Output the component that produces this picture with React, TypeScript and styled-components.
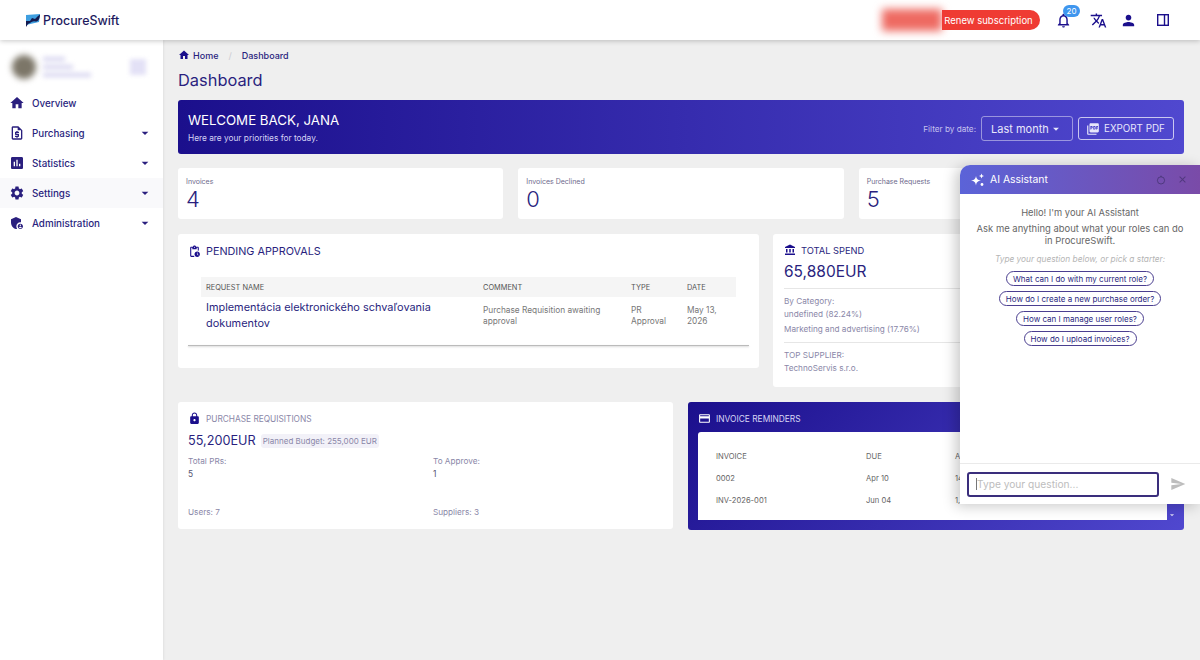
import React from 'react';
import styled, { createGlobalStyle } from 'styled-components';
import {
  MdAccountBalance,
  MdAdminPanelSettings,
  MdArrowDropDown,
  MdAssessment,
  MdClose,
  MdCreditCard,
  MdHome,
  MdLock,
  MdOutlineNotifications,
  MdOutlinePendingActions,
  MdOutlineRequestQuote,
  MdPerson,
  MdPictureAsPdf,
  MdSend,
  MdSettings,
  MdTranslate,
} from 'react-icons/md';

const INK = '#2a1f7e';
const NAVY = '#1b0f8c';
const FONT = '"Inter", "Open Sans", "Liberation Sans", sans-serif';

const GlobalStyle = createGlobalStyle`
  html, body {
    margin: 0;
    padding: 0;
    height: 100%;
    overflow: hidden;
    background: #efefef;
    font-family: ${FONT};
  }
  * { box-sizing: border-box; }
`;

const Page = styled.div`
  position: relative;
  width: 1200px;
  height: 660px;
  overflow: hidden;
  display: flex;
  flex-direction: column;
`;

const TopBar = styled.header`
  height: 40px;
  flex: none;
  background: #fff;
  display: flex;
  align-items: center;
  padding: 0 26px 0 25px;
  box-shadow: 0 1px 5px rgba(0, 0, 0, 0.22);
  position: relative;
  z-index: 2;
`;

const Brand = styled.div`
  display: flex;
  align-items: center;
  gap: 2px;
  font-size: 12.4px;
  font-weight: 500;
  color: #1d1a5e;
  flex: 1;
`;

const RedactedRed = styled.div`
  width: 60px;
  height: 22px;
  background: #ee6a62;
  filter: blur(4px);
`;

const RenewButton = styled.button`
  height: 20px;
  width: 98px;
  border: 0;
  padding: 0 5px 0 0;
  border-radius: 0 10px 10px 0;
  background: #ef3b33;
  color: #fff;
  font: 400 9.5px ${FONT};
  position: relative;
`;

const HeadIcon = styled.div<{ $gap: number }>`
  width: 22px;
  height: 22px;
  display: flex;
  align-items: center;
  justify-content: center;
  color: ${NAVY};
  font-size: 17px;
  margin-left: ${(p) => p.$gap}px;
  position: relative;
`;

const Badge = styled.span`
  position: absolute;
  top: -4px;
  left: 11px;
  width: 17px;
  height: 12px;
  border-radius: 6px;
  background: #3f96ee;
  color: #fff;
  font-size: 8px;
  line-height: 12px;
  text-align: center;
`;

const Body = styled.div`
  flex: 1;
  display: flex;
  min-height: 0;
`;

const Sidebar = styled.aside`
  width: 163px;
  flex: none;
  background: #fff;
  box-shadow: 1px 0 2px rgba(0, 0, 0, 0.06);
  padding-top: 7px;
`;

const UserBlock = styled.div`
  height: 40px;
  display: flex;
  align-items: center;
  padding: 0 12px;
`;

const Avatar = styled.div`
  width: 24px;
  height: 24px;
  border-radius: 50%;
  background: #7c7668;
  filter: blur(3px);
  margin-right: 7px;
`;

const BlurLines = styled.div`
  flex: 1;
  display: flex;
  flex-direction: column;
  gap: 4px;
  filter: blur(2.5px);
`;

const BlurLine = styled.div<{ $w: number }>`
  height: 4px;
  width: ${(p) => p.$w}px;
  background: #d6d4ef;
`;

const BlurSquare = styled.div`
  width: 16px;
  height: 16px;
  background: #e3e1f6;
  filter: blur(2px);
  margin-right: 5px;
`;

const Nav = styled.nav`
  display: flex;
  flex-direction: column;
  margin-top: 1px;
`;

const NavItem = styled.div<{ $hover?: boolean }>`
  height: 30px;
  display: flex;
  align-items: center;
  padding: 0 10px 0 9px;
  color: ${INK};
  font-size: 9.8px;
  font-weight: 500;
  background: ${(p) => (p.$hover ? '#f9f9fb' : 'transparent')};
  svg { flex: none; }
`;

const NavLabel = styled.span`
  flex: 1;
  margin-left: 7px;
`;

const Main = styled.main`
  flex: 1;
  min-width: 0;
  padding: 8px 16px 0 15px;
`;

const Crumbs = styled.div`
  display: flex;
  align-items: center;
  height: 14px;
  font-size: 9px;
  font-weight: 500;
  color: ${INK};
  gap: 3px;
`;

const CrumbSep = styled.span`
  color: #cfcfd6;
  margin: 0 7px;
`;

const PageTitle = styled.h1`
  margin: 8px 0 10px;
  font-size: 16.4px;
  line-height: 20px;
  font-weight: 400;
  color: ${INK};
`;

const Banner = styled.section`
  height: 54px;
  border-radius: 3px;
  background: linear-gradient(90deg, #1b0f8c 0%, #5048cf 100%);
  display: flex;
  align-items: center;
  padding: 0 10px;
  color: #fff;
  margin-bottom: 14px;
`;

const BannerText = styled.div`
  flex: 1;
`;

const BannerTitle = styled.div`
  font-size: 13.3px;
  line-height: 17px;
  font-weight: 400;
`;

const BannerSub = styled.div`
  font-size: 8.3px;
  margin-top: 4px;
  color: #d6d3f4;
`;

const FilterLabel = styled.span`
  font-size: 8.2px;
  color: #c5c2ee;
  margin-right: 5px;
  margin-top: 3px;
`;

const OutlineBox = styled.div`
  border: 1px solid rgba(255, 255, 255, 0.45);
  border-radius: 3px;
  display: flex;
  align-items: center;
  color: #e8e7fb;
  margin-top: 3px;
`;

const DateSelect = styled(OutlineBox)`
  width: 92px;
  height: 25px;
  font-size: 11px;
  padding-left: 9px;
  margin-right: 5px;
`;

const ExportButton = styled(OutlineBox)`
  width: 96px;
  height: 23px;
  font-size: 9.8px;
  padding-left: 7px;
  gap: 4px;
  border-color: rgba(255, 255, 255, 0.7);
`;

const StatRow = styled.div`
  display: grid;
  grid-template-columns: repeat(3, 1fr);
  gap: 15px;
  margin-bottom: 15px;
`;

const Card = styled.div`
  background: #fff;
  border-radius: 3px;
`;

const StatCard = styled(Card)`
  height: 51px;
  padding: 10px 8px;
  color: ${INK};
`;

const StatLabel = styled.div`
  font-size: 7px;
  line-height: 8px;
  color: #6e6a8c;
`;

const StatValue = styled.div`
  font-size: 22px;
  line-height: 24px;
  font-weight: 300;
  margin-top: 1px;
`;

const MiddleRow = styled.div`
  display: grid;
  grid-template-columns: 581px 1fr;
  gap: 14px;
  align-items: start;
  margin-bottom: 15px;
`;

const PendingCard = styled(Card)`
  height: 134px;
  padding: 11px 10px 0;
`;

const CardHeading = styled.div<{ $tone?: string; $size?: number }>`
  display: flex;
  align-items: center;
  gap: 5px;
  color: ${(p) => p.$tone ?? INK};
  font-size: ${(p) => p.$size ?? 10.8}px;
  font-weight: 400;
  svg { color: ${NAVY}; flex: none; }
`;

const ApprovalTable = styled.div`
  margin-top: 19px;
  padding: 0 13px;
  height: 68px;
`;

const ApprovalGrid = styled.div`
  display: grid;
  grid-template-columns: 277px 148px 56px 1fr;
  padding-left: 5px;
`;

const ApprovalHead = styled(ApprovalGrid)`
  height: 20px;
  align-items: center;
  background: #f5f5f5;
  font-size: 7.4px;
  color: #555;
`;

const ApprovalRow = styled(ApprovalGrid)`
  padding-top: 3px;
  align-items: center;
  font-size: 8.3px;
  line-height: 11px;
  color: #777;
`;

const RequestLink = styled.div`
  font-size: 10.9px;
  line-height: 15.5px;
  color: ${INK};
`;

const WrapCell = styled.span<{ $pad: number }>`
  padding-right: ${(p) => p.$pad}px;
`;

const Rule = styled.div`
  height: 1px;
  background: #bbb;
  box-shadow: 0 1px 2px rgba(0, 0, 0, 0.2);
`;

const SpendCard = styled(Card)`
  height: 153px;
  padding: 10px 11px;
`;

const SpendValue = styled.div`
  font-size: 15.5px;
  line-height: 20px;
  color: ${INK};
  margin: 6px 0 2px;
`;

const SpendBlock = styled.div`
  border-top: 1px solid #e6e6e6;
  margin-top: 6px;
  padding-top: 6px;
  font-size: 8.2px;
  color: #8a87a8;
  line-height: 13px;
`;

const SpendLine = styled.div<{ $gap?: number }>`
  margin-top: ${(p) => p.$gap ?? 0}px;
`;

const BottomRow = styled.div`
  display: grid;
  grid-template-columns: 495px minmax(0, 1fr);
  gap: 15px;
`;

const RequisitionCard = styled(Card)`
  height: 127px;
  padding: 10px 10px;
`;

const Amount = styled.div`
  display: flex;
  align-items: center;
  gap: 5px;
  margin-top: 8px;
  font-size: 12.7px;
  line-height: 15px;
  color: ${INK};
`;

const BudgetPill = styled.span`
  background: #f2f1f8;
  border-radius: 3px;
  padding: 2px 2px;
  font-size: 8px;
  line-height: 10px;
  color: #8a87a8;
`;

const ReqGrid = styled.div`
  display: grid;
  grid-template-columns: 245px 1fr;
  margin-top: 7px;
  color: #8a87a8;
  font-size: 8.2px;
  line-height: 12px;
`;

const ReqValue = styled.div`
  color: #55516e;
  font-size: 8.4px;
  margin-top: 1px;
  height: 38px;
`;

const ReminderCard = styled.div`
  height: 128px;
  border-radius: 3px;
  background: linear-gradient(135deg, #1b0f8c 0%, #5048cf 100%);
  padding: 10px 7px 10px 10px;
`;

const ReminderBody = styled.div`
  display: flex;
  align-items: flex-end;
  margin-top: 7px;
  color: #d9d7f5;
`;

const ReminderInner = styled.div`
  background: #fff;
  height: 88px;
  width: 469px;
  flex: none;
  border-radius: 3px 3px 0 0;
  padding: 13px 18px;
  color: #666;
  font-size: 7.6px;
`;

const ReminderGrid = styled.div`
  display: grid;
  grid-template-columns: 150px 89px 1fr;
  height: 22px;
  align-items: center;
`;

const ChatPanel = styled.div`
  position: absolute;
  left: 960px;
  top: 165px;
  width: 240px;
  height: 339px;
  background: #fff;
  border-radius: 10px 0 0 0;
  box-shadow: -4px 2px 14px rgba(0, 0, 0, 0.22);
  display: flex;
  flex-direction: column;
  z-index: 5;
`;

const ChatHead = styled.div`
  height: 29px;
  flex: none;
  border-radius: 10px 0 0 0;
  background: linear-gradient(90deg, #5b63d8 0%, #7a4ba8 100%);
  display: flex;
  align-items: center;
  padding: 0 12px 0 10px;
  color: #fff;
  font-size: 10.4px;
  gap: 5px;
`;

const ChatTitle = styled.span`
  flex: 1;
`;

const ChatDim = styled.span`
  display: flex;
  color: rgba(50, 40, 90, 0.55);
  margin-left: 6px;
`;

const ChatBody = styled.div`
  flex: 1;
  min-height: 0;
  padding: 13px 12px 0;
  display: flex;
  flex-direction: column;
  align-items: center;
  text-align: center;
  color: #666;
`;

const Hello = styled.div`
  font-size: 9.3px;
  line-height: 12px;
`;

const Ask = styled.div`
  font-size: 9.45px;
  line-height: 12px;
  margin-top: 4px;
`;

const Hint = styled.div`
  margin: 7px 0 1px;
  font-size: 8.3px;
  line-height: 11px;
  font-style: italic;
  color: #b5b5b5;
`;

const Starter = styled.button`
  margin-top: 5px;
  height: 15px;
  border: 1px solid #4b3f90;
  border-radius: 8px;
  background: #fff;
  padding: 0 6px;
  color: ${INK};
  font: 8px ${FONT};
`;

const Composer = styled.div`
  height: 41px;
  flex: none;
  border-top: 1px solid #eaeaea;
  display: flex;
  align-items: center;
  padding: 0 14px 0 7px;
  justify-content: space-between;
  color: #bdbdbd;
`;

const QuestionBox = styled.div`
  width: 192px;
  height: 25px;
  border: 2px solid #3a2e7c;
  border-radius: 3px;
  padding-left: 7px;
  display: flex;
  align-items: center;
  font-size: 10.2px;
  color: #bdbdbd;
`;

const Caret = styled.span`
  width: 1px;
  height: 12px;
  background: #777;
`;

const Logo = () => (
  <svg width="16" height="15" viewBox="0 0 16 15">
    <path d="M1 2 L15 1 L14 9 L1 12 Z" fill="#3f9fe0" />
    <path d="M1 14 L1 8 L5 8 L7 5 L10 6 L13 3 L15 1.5 C15 6 13 9 10 8.5 C8 8 7 9 5 10 L3 11 Z" fill="#141a4f" />
  </svg>
);

const PanelIcon = () => (
  <svg width="14" height="14" viewBox="0 0 14 14" fill="none" stroke={NAVY} strokeWidth="1.4">
    <rect x="1.7" y="1.7" width="10.6" height="10.6" />
    <path d="M8.5 1.7 V12.3" />
  </svg>
);

const Sparkle = () => (
  <svg width="15" height="14" viewBox="0 0 15 14" fill="#fff">
    <path d="M6 3 C6.6 6 7.6 7 11 7.6 C7.6 8.2 6.6 9.2 6 12.5 C5.4 9.2 4.4 8.2 1 7.6 C4.4 7 5.4 6 6 3 Z" />
    <path d="M11.5 0.5 L12.2 2.3 L14 3 L12.2 3.7 L11.5 5.5 L10.8 3.7 L9 3 L10.8 2.3 Z" />
    <circle cx="12" cy="11.5" r="1.4" />
  </svg>
);

const RingIcon = () => (
  <svg width="10" height="10" viewBox="0 0 10 10" fill="none" stroke="currentColor" strokeWidth="1">
    <circle cx="5" cy="5.4" r="3.6" />
    <path d="M5 0.6 V2" />
  </svg>
);

const NAV_ITEMS = [
  { label: 'Overview', icon: <MdHome size={16} /> },
  { label: 'Purchasing', icon: <MdOutlineRequestQuote size={16} />, caret: true },
  { label: 'Statistics', icon: <MdAssessment size={16} />, caret: true },
  { label: 'Settings', icon: <MdSettings size={16} />, caret: true, hover: true },
  { label: 'Administration', icon: <MdAdminPanelSettings size={16} />, caret: true },
];

const STATS = [
  { label: 'Invoices', value: 4 },
  { label: 'Invoices Declined', value: 0 },
  { label: 'Purchase Requests', value: 5 },
];

const STARTERS = [
  'What can I do with my current role?',
  'How do I create a new purchase order?',
  'How can I manage user roles?',
  'How do I upload invoices?',
];

export default function App() {
  return (
    <Page>
      <GlobalStyle />
      <TopBar>
        <Brand>
          <Logo />
          ProcureSwift
        </Brand>
        <RedactedRed />
        <RenewButton>Renew subscription</RenewButton>
        <HeadIcon $gap={12}>
          <MdOutlineNotifications />
          <Badge>20</Badge>
        </HeadIcon>
        <HeadIcon $gap={13}><MdTranslate /></HeadIcon>
        <HeadIcon $gap={8}><MdPerson /></HeadIcon>
        <HeadIcon $gap={13}><PanelIcon /></HeadIcon>
      </TopBar>
      <Body>
        <Sidebar>
          <UserBlock>
            <Avatar />
            <BlurLines>
              <BlurLine $w={22} />
              <BlurLine $w={30} />
              <BlurLine $w={48} />
            </BlurLines>
            <BlurSquare />
          </UserBlock>
          <Nav>
            {NAV_ITEMS.map((item) => (
              <NavItem key={item.label} $hover={item.hover}>
                {item.icon}
                <NavLabel>{item.label}</NavLabel>
                {item.caret && <MdArrowDropDown size={16} />}
              </NavItem>
            ))}
          </Nav>
        </Sidebar>
        <Main>
          <Crumbs>
            <MdHome size={12} color={NAVY} />
            Home
            <CrumbSep>/</CrumbSep>
            Dashboard
          </Crumbs>
          <PageTitle>Dashboard</PageTitle>
          <Banner>
            <BannerText>
              <BannerTitle>WELCOME BACK, JANA</BannerTitle>
              <BannerSub>Here are your priorities for today.</BannerSub>
            </BannerText>
            <FilterLabel>Filter by date:</FilterLabel>
            <DateSelect>
              Last month
              <MdArrowDropDown size={14} />
            </DateSelect>
            <ExportButton>
              <MdPictureAsPdf size={14} />
              EXPORT PDF
            </ExportButton>
          </Banner>
          <StatRow>
            {STATS.map((s) => (
              <StatCard key={s.label}>
                <StatLabel>{s.label}</StatLabel>
                <StatValue>{s.value}</StatValue>
              </StatCard>
            ))}
          </StatRow>
          <MiddleRow>
            <PendingCard>
              <CardHeading>
                <MdOutlinePendingActions size={13} />
                PENDING APPROVALS
              </CardHeading>
              <ApprovalTable>
                <ApprovalHead>
                  <span>REQUEST NAME</span>
                  <span>COMMENT</span>
                  <span>TYPE</span>
                  <span>DATE</span>
                </ApprovalHead>
                <ApprovalRow>
                  <RequestLink>Implementácia elektronického schvaľovania dokumentov</RequestLink>
                  <WrapCell $pad={20}>Purchase Requisition awaiting approval</WrapCell>
                  <WrapCell $pad={14}>PR Approval</WrapCell>
                  <WrapCell $pad={14}>May 13, 2026</WrapCell>
                </ApprovalRow>
              </ApprovalTable>
              <Rule />
            </PendingCard>
            <SpendCard>
              <CardHeading $size={9.3}>
                <MdAccountBalance size={12} />
                TOTAL SPEND
              </CardHeading>
              <SpendValue>65,880EUR</SpendValue>
              <SpendBlock>
                <SpendLine>By Category:</SpendLine>
                <SpendLine>undefined (82.24%)</SpendLine>
                <SpendLine $gap={2}>Marketing and advertising (17.76%)</SpendLine>
              </SpendBlock>
              <SpendBlock>
                <SpendLine>TOP SUPPLIER:</SpendLine>
                <SpendLine>TechnoServis s.r.o.</SpendLine>
              </SpendBlock>
            </SpendCard>
          </MiddleRow>
          <BottomRow>
            <RequisitionCard>
              <CardHeading $tone="#8a87a8" $size={8.3}>
                <MdLock size={13} />
                PURCHASE REQUISITIONS
              </CardHeading>
              <Amount>
                55,200EUR
                <BudgetPill>Planned Budget: 255,000 EUR</BudgetPill>
              </Amount>
              <ReqGrid>
                <div>
                  Total PRs:
                  <ReqValue>5</ReqValue>
                </div>
                <div>
                  To Approve:
                  <ReqValue>1</ReqValue>
                </div>
                <div>Users: 7</div>
                <div>Suppliers: 3</div>
              </ReqGrid>
            </RequisitionCard>
            <ReminderCard>
              <CardHeading $tone="#d9d7f5" $size={8.4}>
                <MdCreditCard size={13} color="#fff" />
                INVOICE REMINDERS
              </CardHeading>
              <ReminderBody>
                <ReminderInner>
                  <ReminderGrid>
                    <span>INVOICE</span>
                    <span>DUE</span>
                    <span>AMOUNT</span>
                  </ReminderGrid>
                  <ReminderGrid>
                    <span>0002</span>
                    <span>Apr 10</span>
                    <span>14</span>
                  </ReminderGrid>
                  <ReminderGrid>
                    <span>INV-2026-001</span>
                    <span>Jun 04</span>
                    <span>1,4</span>
                  </ReminderGrid>
                </ReminderInner>
                <MdArrowDropDown size={10} />
              </ReminderBody>
            </ReminderCard>
          </BottomRow>
        </Main>
      </Body>
      <ChatPanel>
        <ChatHead>
          <Sparkle />
          <ChatTitle>AI Assistant</ChatTitle>
          <ChatDim><RingIcon /></ChatDim>
          <ChatDim><MdClose size={11} /></ChatDim>
        </ChatHead>
        <ChatBody>
          <Hello>Hello! I'm your AI Assistant</Hello>
          <Ask>Ask me anything about what your roles can do in ProcureSwift.</Ask>
          <Hint>Type your question below, or pick a starter:</Hint>
          {STARTERS.map((s) => (
            <Starter key={s}>{s}</Starter>
          ))}
        </ChatBody>
        <Composer>
          <QuestionBox>
            <Caret />
            Type your question...
          </QuestionBox>
          <MdSend size={16} />
        </Composer>
      </ChatPanel>
    </Page>
  );
}
